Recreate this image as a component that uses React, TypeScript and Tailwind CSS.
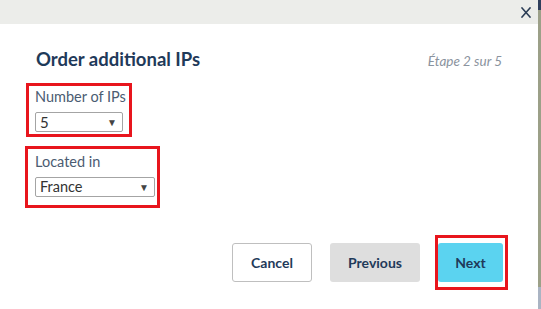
import React from "react";

export default function App() {
  return (
    <div className="w-[541px] h-[309px] flex bg-white overflow-hidden" style={{ fontFamily: "Lato, 'Open Sans', sans-serif" }}>
      <div className="flex-1 flex flex-col">
        <div className="h-[24px] bg-[#ecedea] flex items-center justify-end pr-[7px]">
          <svg width="10" height="11" viewBox="0 0 10 11" className="mt-[1px]">
            <path d="M1 1 L9 10 M9 1 L1 10" stroke="#2b3d55" strokeWidth="1.6" strokeLinecap="square" fill="none" />
          </svg>
        </div>
        <div className="flex items-baseline justify-between pl-[36px] pr-[36px] pt-[24px]">
          <div className="text-[18.5px] leading-[22px] font-bold text-[#1f3a5a]">Order additional IPs</div>
          <div className="text-[13.5px] italic text-[#8a939e]">Étape 2 sur 5</div>
        </div>
        <div className="pl-[26px] mt-[12px] flex flex-col items-start">
          <div className="w-[106px] border-[3px] border-[#e8151d] pt-[2px] pb-[2px] pl-[6px]">
            <div className="text-[14.5px] leading-[18px] text-[#4b5c72]">Number of IPs</div>
            <div className="mt-[6px] w-[88px] h-[20px] border border-[#a4a4a4] rounded-[2px] flex items-center justify-between pl-[4px] pr-[5px] text-[15px] text-[#333]">
              <span>5</span>
              <span className="text-[10px] text-[#444]">▼</span>
            </div>
          </div>
          <div className="-ml-[1px] mt-[9px] w-[135px] border-[3px] border-[#e8151d] pt-[4px] pb-[8px] pl-[7px]">
            <div className="text-[14.5px] leading-[18px] text-[#4b5c72]">Located in</div>
            <div className="mt-[6px] w-[120px] h-[20px] border border-[#a4a4a4] rounded-[2px] flex items-center justify-between pl-[4px] pr-[5px] text-[14.5px] text-[#333]">
              <span>France</span>
              <span className="text-[10px] text-[#444]">▼</span>
            </div>
          </div>
        </div>
        <div className="mt-[27px] flex items-center justify-end pr-[30px]">
          <button className="w-[80px] h-[39px] border border-[#bfbfbf] rounded-[3px] bg-white text-[14px] font-bold text-[#1f3a5a]">Cancel</button>
          <button className="ml-[18px] w-[90px] h-[39px] rounded-[3px] bg-[#dedede] text-[14px] font-bold text-[#1f3a5a]">Previous</button>
          <div className="ml-[15px] border-[3px] border-[#e8151d] pt-[5px] pb-[5px] pr-[2px]">
            <button className="w-[65px] h-[39px] rounded-[3px] bg-[#5bd3f0] text-[14px] font-bold text-[#1f3a5a]">Next</button>
          </div>
        </div>
      </div>
      <div className="w-[3px] flex flex-col">
        <div className="h-[10px] bg-[#2f3f5c]" />
        <div className="flex-1 bg-[#9ca088]" />
        <div className="h-[22px] bg-[#aab4c3]" />
      </div>
    </div>
  );
}
